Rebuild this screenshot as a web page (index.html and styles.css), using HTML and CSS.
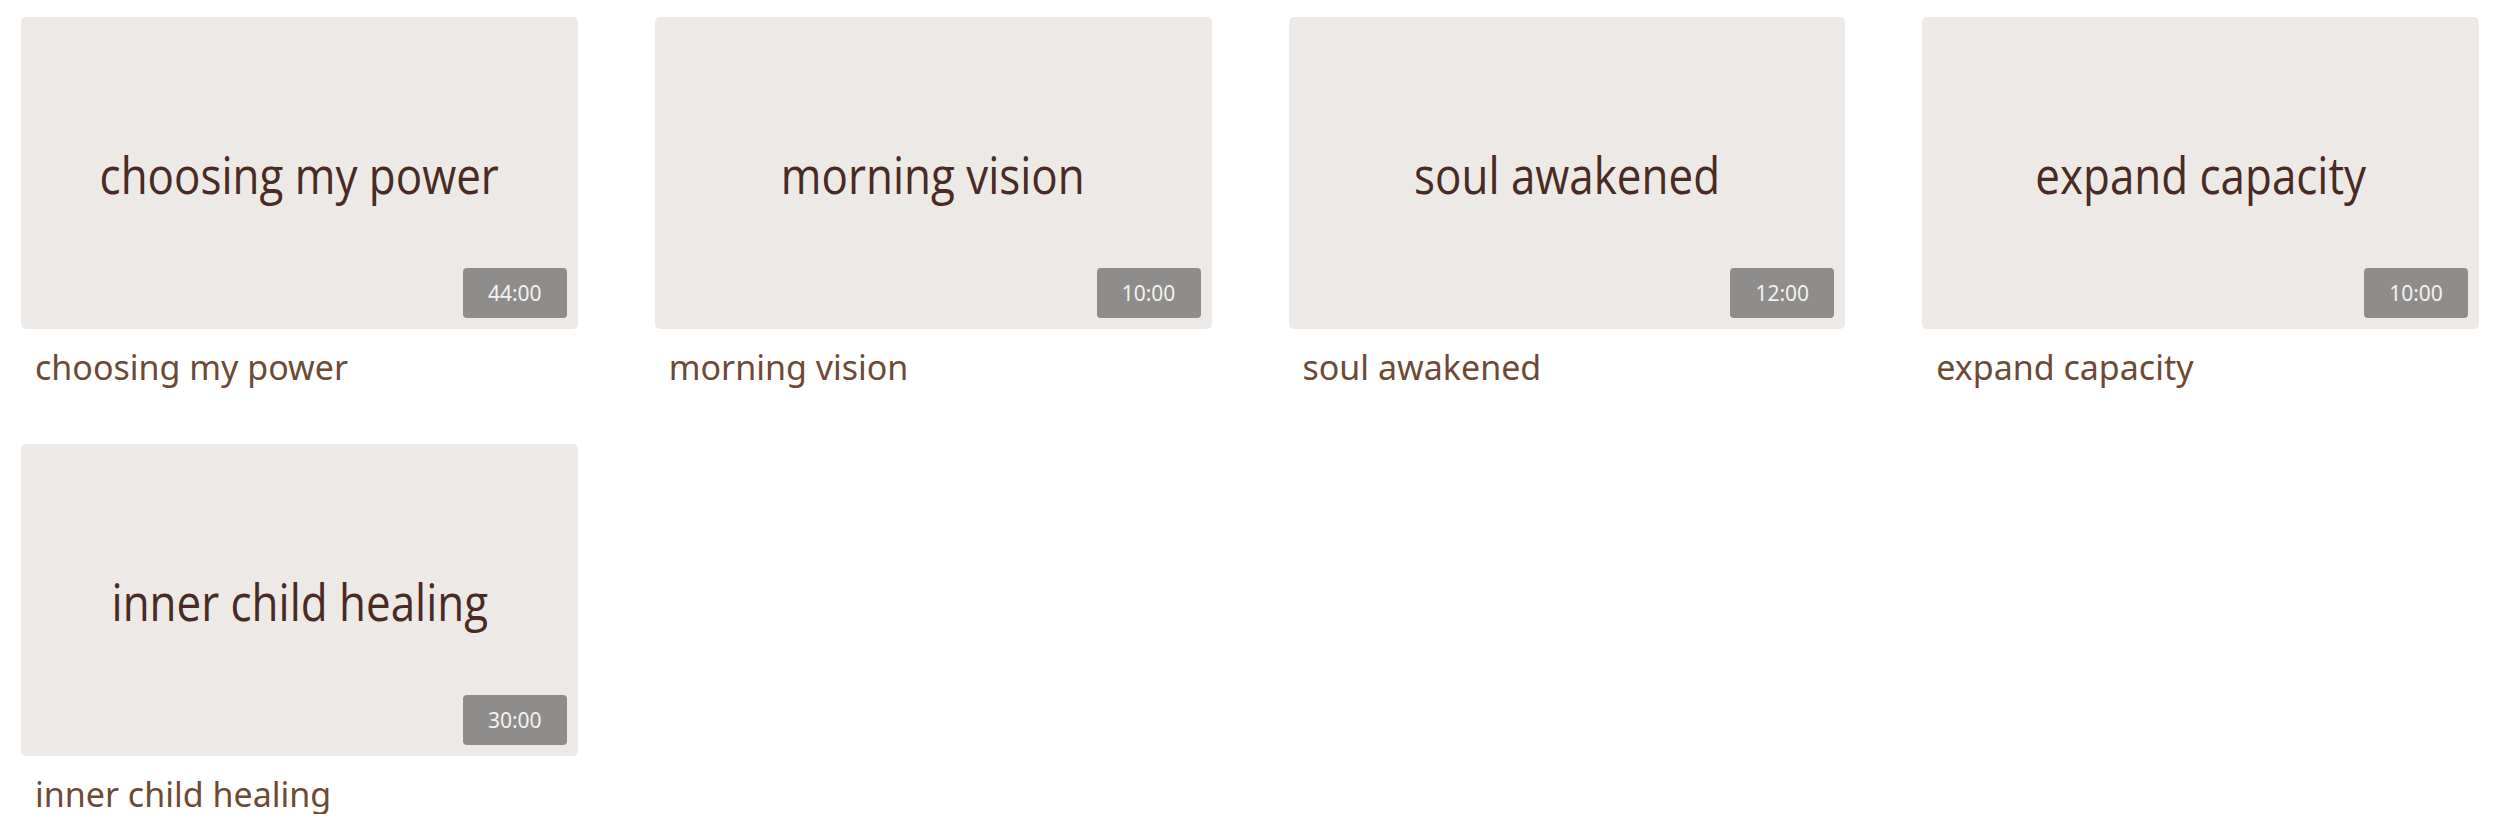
FILE: index.html
```html
<!DOCTYPE html>
<html>
<head>
<meta charset="utf-8">
<link rel="stylesheet" href="styles.css">
</head>
<body>
<div class="grid">
  <div class="item">
    <div class="thumb">
      <div class="thumb-title">choosing my power</div>
      <div class="duration">44:00</div>
    </div>
    <div class="caption">choosing my power</div>
  </div>
  <div class="item">
    <div class="thumb">
      <div class="thumb-title">morning vision</div>
      <div class="duration">10:00</div>
    </div>
    <div class="caption">morning vision</div>
  </div>
  <div class="item">
    <div class="thumb">
      <div class="thumb-title">soul awakened</div>
      <div class="duration">12:00</div>
    </div>
    <div class="caption">soul awakened</div>
  </div>
  <div class="item">
    <div class="thumb">
      <div class="thumb-title">expand capacity</div>
      <div class="duration">10:00</div>
    </div>
    <div class="caption">expand capacity</div>
  </div>
  <div class="item">
    <div class="thumb">
      <div class="thumb-title">inner child healing</div>
      <div class="duration">30:00</div>
    </div>
    <div class="caption">inner child healing</div>
  </div>
</div>
</body>
</html>
```

FILE: styles.css
```css
html, body {
  margin: 0;
  padding: 0;
  background: #ffffff;
}

.grid {
  display: grid;
  grid-template-columns: repeat(4, 1fr);
  column-gap: 77px;
  row-gap: 56px;
  padding: 17px 21px 0 21px;
}

.item {
  display: flex;
  flex-direction: column;
}

.thumb {
  position: relative;
  aspect-ratio: 557 / 312;
  background: #ede9e6;
  border-radius: 5px;
  display: flex;
  align-items: center;
  justify-content: center;
}

.thumb-title {
  font-family: "Open Sans", sans-serif;
  font-size: 52px;
  color: #4a2b23;
  margin-top: 2px;
  white-space: nowrap;
  transform: scaleX(0.845);
}

.duration {
  position: absolute;
  right: 11px;
  bottom: 11px;
  width: 104px;
  height: 50px;
  border-radius: 4px;
  background: #8e8d8b;
  color: #f4f2f0;
  font-family: "Noto Sans", sans-serif;
  font-stretch: 87.5%;
  font-size: 21px;
  display: flex;
  align-items: center;
  justify-content: center;
}

.caption {
  font-family: "Noto Sans", sans-serif;
  font-stretch: 87.5%;
  font-size: 34px;
  color: #6e4a34;
  padding: 18px 0 0 14px;
  line-height: 1.2;
}
```
